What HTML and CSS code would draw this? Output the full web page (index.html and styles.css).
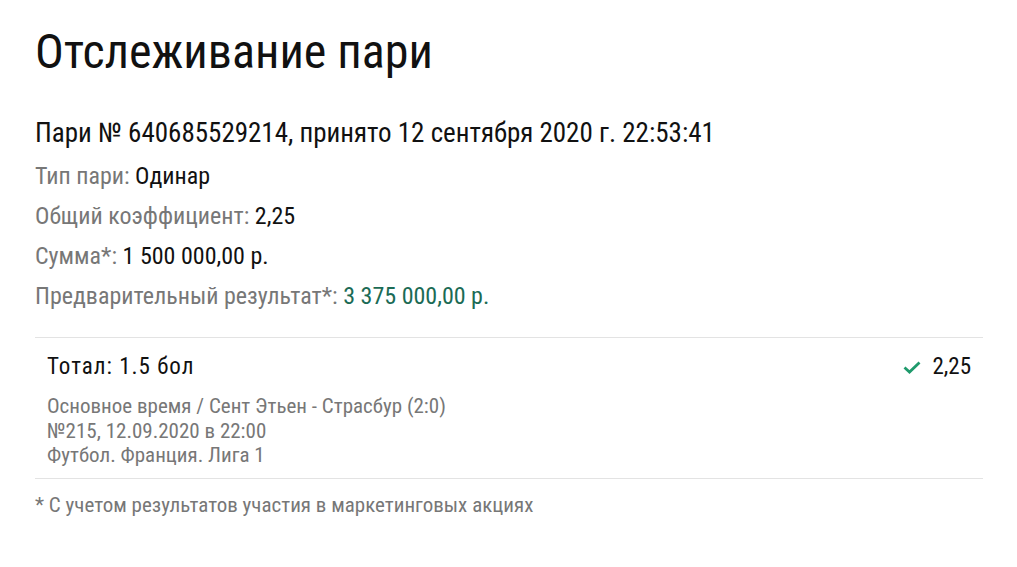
FILE: index.html
```html
<!DOCTYPE html>
<html lang="ru">
<head>
    <meta charset="UTF-8">
    <meta name="viewport" content="width=device-width, initial-scale=1.0">
    <title>Отслеживание пари</title>
    <link rel="stylesheet" href="styles.css">
</head>
<body>
    <div class="layout">
        <main class="content">
            <h1>Отслеживание пари</h1>

            <h2 class="bet-title">Пари № 640685529214, принято 12 сентября 2020 г. 22:53:41</h2>

            <div class="info">
                <div class="info-row"><span class="label">Тип пари:</span> Одинар</div>
                <div class="info-row"><span class="label">Общий коэффициент:</span> 2,25</div>
                <div class="info-row"><span class="label">Сумма*:</span> 1 500 000,00 р.</div>
                <div class="info-row"><span class="label">Предварительный результат*:</span> <span class="win">3 375 000,00 р.</span></div>
            </div>

            <div class="event">
                <div class="event-head">
                    <span class="event-name">Тотал: 1.5 бол</span>
                    <span class="event-coef">
                        <svg class="check" width="18" height="15" viewBox="0 0 18 15">
                            <path d="M1.5 7.5 L6.5 12 L16.5 2.5" fill="none" stroke="#1f9a6c" stroke-width="2.8"/>
                        </svg>
                        2,25
                    </span>
                </div>
                <div class="event-meta">
                    <div>Основное время / Сент Этьен - Страсбур (2:0)</div>
                    <div>№215, 12.09.2020 в 22:00</div>
                    <div>Футбол. Франция. Лига 1</div>
                </div>
            </div>

            <p class="note">* С учетом результатов участия в маркетинговых акциях</p>
        </main>
        <aside class="side"></aside>
    </div>
</body>
</html>
```

FILE: styles.css
```css
body {
    margin: 0;
    font-family: "Roboto", "Noto Sans", sans-serif;
    font-stretch: condensed;
    color: #111;
    background: #fff;
    overflow: hidden;
}
.layout {
    display: flex;
    height: 567px;
}
.content {
    width: 948px;
    padding: 0 34px 0 35px;
}
.side {
    flex: 1;
    margin-top: 55px;
    height: 465px;
    box-shadow: -2px 0 6px rgba(0,0,0,0.08);
}
h1 {
    font-size: 48px;
    font-weight: 400;
    margin: 25px 0 0;
    line-height: 54px;
}
.bet-title {
    font-size: 27px;
    font-weight: 400;
    margin: 39px 0 0;
    line-height: 30px;
}
.info {
    margin-top: 8px;
    font-size: 24px;
}
.info-row {
    line-height: 40px;
}
.label {
    color: #777;
}
.win {
    color: #1b6b55;
}
.event {
    margin-top: 21px;
    border-top: 1px solid #e3e3e3;
    border-bottom: 1px solid #e3e3e3;
    padding: 14px 12px 10px;
}
.event-head {
    display: flex;
    justify-content: space-between;
    align-items: center;
    font-size: 23px;
    line-height: 30px;
}
.event-name {
    letter-spacing: 1px;
}
.event-coef {
    display: flex;
    align-items: center;
    gap: 11px;
}
.event-meta {
    margin-top: 12px;
    color: #777;
    font-size: 21px;
    line-height: 24.5px;
}
.note {
    margin: 14px 0 0;
    color: #777;
    font-size: 21px;
    line-height: 24px;
}
```
